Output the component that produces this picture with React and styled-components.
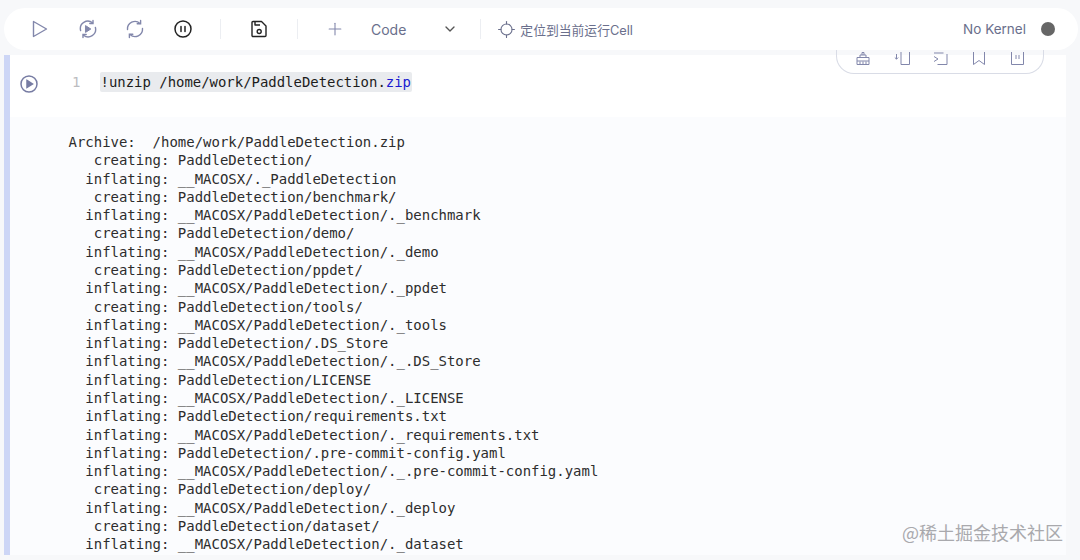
import styled, { createGlobalStyle } from "styled-components";
import { Plus, ChevronDown, Locate } from "lucide-react";

const GlobalStyle = createGlobalStyle`
  html, body {
    margin: 0;
    padding: 0;
    background: #fff;
  }
`;

const Page = styled.div`
  width: 1080px;
  height: 560px;
  box-sizing: border-box;
  padding-bottom: 5px;
  overflow: hidden;
  display: flex;
  flex-direction: column;
  background: #f7f8fa;
  position: relative;
`;

const Toolbar = styled.div`
  height: 42px;
  flex: none;
  margin: 8px 2px 0 4px;
  padding: 0 23px 0 24px;
  background: #fff;
  border-radius: 21px;
  display: flex;
  align-items: center;
  position: relative;
  z-index: 2;
`;

const ToolButton = styled.span`
  width: ${(p) => p.$w || 24}px;
  margin-right: ${(p) => p.$mr || 0}px;
  display: flex;
  align-items: center;
  justify-content: center;
  color: ${(p) => p.$color || "#8287ab"};
  flex: none;
`;

const Divider = styled.span`
  width: 1px;
  height: 20px;
  background: #eceef2;
  margin-right: ${(p) => p.$mr || 0}px;
  flex: none;
`;

const ToolText = styled.span`
  font-family: Inter, "Noto Sans CJK SC", sans-serif;
  font-size: ${(p) => p.$size || 14}px;
  color: #6a6f8c;
  margin-right: ${(p) => p.$mr || 0}px;
`;

const Spacer = styled.span`
  flex: 1;
`;

const KernelDot = styled.span`
  width: 14px;
  height: 14px;
  border-radius: 50%;
  background: #666;
  margin-left: 15px;
`;

const Body = styled.div`
  flex: 1;
  min-height: 0;
  margin: 5px 14px 0 4px;
  background: #fff;
  border-left: 6px solid #cdd6f6;
  display: flex;
  flex-direction: column;
  position: relative;
`;

const InputRow = styled.div`
  height: 62px;
  flex: none;
  box-sizing: border-box;
  display: flex;
  align-items: center;
  padding: 0 0 8px 10px;
`;

const RunButton = styled.span`
  color: #777ca3;
  display: flex;
  width: 18px;
  margin: 3px 34px 0 0;
`;

const LineNo = styled.span`
  font-family: "DejaVu Sans Mono", monospace;
  font-size: 14px;
  color: #bcbcc0;
  width: 28px;
`;

const CodeLine = styled.code`
  font-family: "DejaVu Sans Mono", monospace;
  font-size: 13.95px;
  line-height: 20px;
  padding: 0 1px 0 0.5px;
  color: #1c1c1c;
  background: #e9ebee;
  border-radius: 2px;
`;

const Extension = styled.span`
  color: #1a1ad0;
`;

const CellTools = styled.div`
  position: absolute;
  top: -10px;
  right: 22px;
  width: 208px;
  height: 29px;
  box-sizing: border-box;
  border: 1px solid #d9dce6;
  border-top: none;
  border-radius: 0 0 18px 18px;
  display: flex;
  align-items: flex-end;
  padding: 0 0 8px 7px;
  color: #8287ab;
`;

const CellToolIcon = styled.span`
  width: 38.5px;
  display: flex;
  justify-content: center;
  flex: none;
`;

const Output = styled.pre`
  flex: 1;
  min-height: 0;
  margin: 0;
  padding: 16px 0 0 58.5px;
  background: #fbfcfe;
  font-family: "DejaVu Sans Mono", monospace;
  font-size: 13.98px;
  line-height: 18.28px;
  color: #2d2d2d;
  overflow: hidden;
`;

const Watermark = styled.div`
  position: absolute;
  right: 17px;
  bottom: 17px;
  font-family: "Noto Sans CJK SC", sans-serif;
  font-size: 18px;
  line-height: 22px;
  color: #a9a9ad;
  z-index: 3;
`;

const PlayIcon = () => (
  <svg width="16" height="18" viewBox="0 0 16 18" fill="none" stroke="currentColor" strokeWidth="1.4" strokeLinejoin="round">
    <path d="M1.5 1.5L14.5 9L1.5 16.5z" />
  </svg>
);

const StepIcon = () => (
  <svg width="20" height="20" viewBox="0 0 20 20" fill="none" stroke="currentColor" strokeWidth="1.4" strokeLinecap="round">
    <path d="M2.6 11.5A7.5 7.5 0 0 1 14.5 3.8" />
    <path d="M17.4 8.5A7.5 7.5 0 0 1 5.5 16.2" />
    <path d="M15 1.5v3h-3.2M5 18.5v-3h3.2" />
    <path d="M7.8 6.8l5 3.2-5 3.2z" fill="currentColor" strokeWidth="1" />
  </svg>
);

const RefreshIcon = () => (
  <svg width="20" height="20" viewBox="0 0 20 20" fill="none" stroke="currentColor" strokeWidth="1.4" strokeLinecap="round">
    <path d="M2.5 10.5A7.5 7.5 0 0 1 15 4.4" />
    <path d="M17.5 9.5A7.5 7.5 0 0 1 5 15.6" />
    <path d="M15.6 1.4v3.4h-3.4M4.4 18.6v-3.4h3.4" />
  </svg>
);

const PauseIcon = () => (
  <svg width="18" height="18" viewBox="0 0 18 18" fill="none" stroke="currentColor" strokeWidth="1.5" strokeLinecap="round">
    <circle cx="9" cy="9" r="8" />
    <path d="M7 6.5v5M11 6.5v5" />
  </svg>
);

const SaveIcon = () => (
  <svg width="18" height="18" viewBox="0 0 18 18" fill="none" stroke="currentColor" strokeWidth="1.4" strokeLinejoin="round">
    <path d="M2 2.5a1 1 0 0 1 1-1h8.5L16 6v9.5a1 1 0 0 1-1 1H3a1 1 0 0 1-1-1z" />
    <path d="M5 2v3h5" />
    <circle cx="9.2" cy="11.5" r="2" />
  </svg>
);

const RunCircleIcon = () => (
  <svg width="18" height="18" viewBox="0 0 18 18" fill="none" stroke="currentColor" strokeWidth="1.5">
    <circle cx="9" cy="9" r="8" />
    <path d="M7 5.5l5.5 3.5L7 12.5z" fill="currentColor" />
  </svg>
);

const BrushIcon = () => (
  <svg width="14" height="13" viewBox="0 0 14 13" fill="none" stroke="currentColor" strokeWidth="1">
    <path d="M1 12.5V5.5h12v7zM4 5.5V3h6v2.5M6 3V.5h2V3M1 9h12M4 12.5V9.5M7 12.5V9.5M10 12.5V9.5" />
  </svg>
);

const InsertIcon = () => (
  <svg width="16" height="13" viewBox="0 0 16 13" fill="none" stroke="currentColor" strokeWidth="1">
    <path d="M7 0v12.5h8.5V0M2.5 2v5M.8 5.5l1.7 1.7 1.7-1.7" />
  </svg>
);

const ConsoleIcon = () => (
  <svg width="15" height="13" viewBox="0 0 15 13" fill="none" stroke="currentColor" strokeWidth="1">
    <path d="M1 1h9.5M14 2v10.5H4.5M1 4.5L5 7l-4 2.5" />
  </svg>
);

const BookmarkIcon = () => (
  <svg width="14" height="13" viewBox="0 0 14 13" fill="none" stroke="currentColor" strokeWidth="1">
    <path d="M1.5 0v12.5L7 8.5l5.5 4V0" />
  </svg>
);

const ColumnsIcon = () => (
  <svg width="13" height="13" viewBox="0 0 13 13" fill="none" stroke="currentColor" strokeWidth="1">
    <path d="M.5 0v12.5h12V0M5 3v4M8 3v4" />
  </svg>
);

const outputLines = [
  "Archive:  /home/work/PaddleDetection.zip",
  "   creating: PaddleDetection/",
  "  inflating: __MACOSX/._PaddleDetection",
  "   creating: PaddleDetection/benchmark/",
  "  inflating: __MACOSX/PaddleDetection/._benchmark",
  "   creating: PaddleDetection/demo/",
  "  inflating: __MACOSX/PaddleDetection/._demo",
  "   creating: PaddleDetection/ppdet/",
  "  inflating: __MACOSX/PaddleDetection/._ppdet",
  "   creating: PaddleDetection/tools/",
  "  inflating: __MACOSX/PaddleDetection/._tools",
  "  inflating: PaddleDetection/.DS_Store",
  "  inflating: __MACOSX/PaddleDetection/._.DS_Store",
  "  inflating: PaddleDetection/LICENSE",
  "  inflating: __MACOSX/PaddleDetection/._LICENSE",
  "  inflating: PaddleDetection/requirements.txt",
  "  inflating: __MACOSX/PaddleDetection/._requirements.txt",
  "  inflating: PaddleDetection/.pre-commit-config.yaml",
  "  inflating: __MACOSX/PaddleDetection/._.pre-commit-config.yaml",
  "   creating: PaddleDetection/deploy/",
  "  inflating: __MACOSX/PaddleDetection/._deploy",
  "   creating: PaddleDetection/dataset/",
  "  inflating: __MACOSX/PaddleDetection/._dataset",
];

const App = () => (
  <Page>
    <GlobalStyle />
    <Toolbar>
      <ToolButton $mr={24}><PlayIcon /></ToolButton>
      <ToolButton $mr={23}><StepIcon /></ToolButton>
      <ToolButton $mr={24}><RefreshIcon /></ToolButton>
      <ToolButton $mr={25} $color="#222"><PauseIcon /></ToolButton>
      <Divider $mr={26} />
      <ToolButton $mr={26} $color="#222"><SaveIcon /></ToolButton>
      <Divider $mr={25} />
      <ToolButton $mr={24}><Plus size={20} strokeWidth={1.3} /></ToolButton>
      <ToolText $mr={36}>Code</ToolText>
      <ToolButton $w={16} $mr={22} $color="#555"><ChevronDown size={16} /></ToolButton>
      <Divider $mr={15} />
      <ToolButton $w={20} $mr={4} $color="#6a6f8c"><Locate size={19} strokeWidth={1.4} /></ToolButton>
      <ToolText $size={12.8}>定位到当前运行Cell</ToolText>
      <Spacer />
      <ToolText $size={13.5}>No Kernel</ToolText>
      <KernelDot />
    </Toolbar>
    <Body>
      <CellTools>
        <CellToolIcon><BrushIcon /></CellToolIcon>
        <CellToolIcon><InsertIcon /></CellToolIcon>
        <CellToolIcon><ConsoleIcon /></CellToolIcon>
        <CellToolIcon><BookmarkIcon /></CellToolIcon>
        <CellToolIcon><ColumnsIcon /></CellToolIcon>
      </CellTools>
      <InputRow>
        <RunButton><RunCircleIcon /></RunButton>
        <LineNo>1</LineNo>
        <CodeLine>!unzip /home/work/PaddleDetection.<Extension>zip</Extension></CodeLine>
      </InputRow>
      <Output>{outputLines.join("\n")}</Output>
    </Body>
    <Watermark>@稀土掘金技术社区</Watermark>
  </Page>
);

export default App;
